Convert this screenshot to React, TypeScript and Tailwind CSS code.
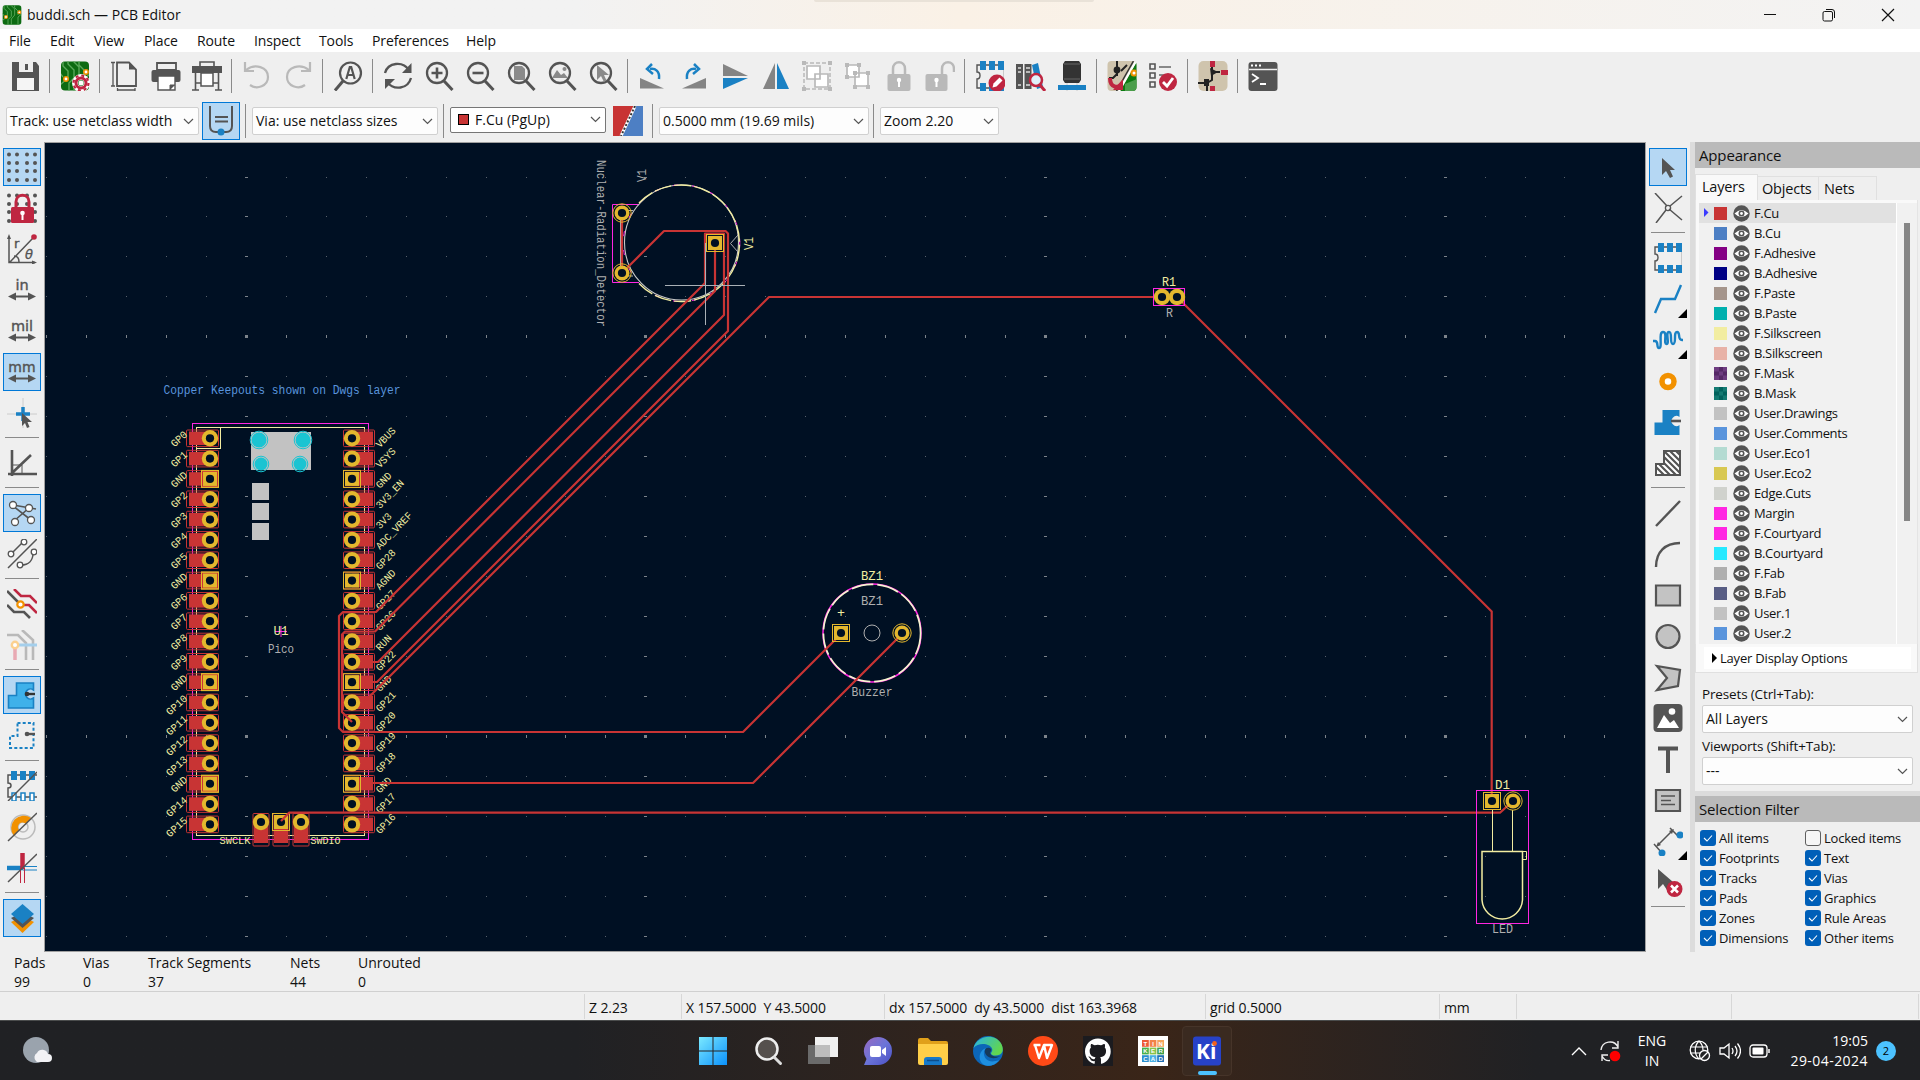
import React from 'react';
import type { ReactNode } from 'react';

const D = '#545454';
const B = '#1a81c4';
const R = '#bf2641';
const G = '#b9b9b9';
const CU = '#c83434';
const GOLD = '#e3b72e';
const BG = '#001023';
const SILK = '#f2eda1';
const FAB = '#afafaf';

function Ic({ children, s = 30 }: { children: ReactNode; s?: number }) {
  return (
    <svg width={s} height={s} viewBox="0 0 30 30" fill="none" className="block shrink-0">
      {children}
    </svg>
  );
}

function BoardBg({ id }: { id: string }) {
  return (
    <g>
      <clipPath id={id}><rect x="1" y="0.5" width="28" height="29" rx="4" /></clipPath>
      <g clipPath={`url(#${id})`}>
        <rect width="30" height="30" fill="#0d6b12" />
        <path d="M3 0v5l5 5v7l-8 7M8 0v3l6 6v8l-5 5v8M13 0l6 6v9l-5 6v9M19 0v4l5 5v6M30 13l-6 5v12M0 12l3 4" stroke="#5aa85a" strokeWidth="1.4" />
        <circle cx="6" cy="18" r="2.2" fill="#fff" stroke="#f29100" strokeWidth="1.6" />
        <circle cx="26" cy="11" r="2.2" fill="#fff" stroke="#f29100" strokeWidth="1.6" />
      </g>
    </g>
  );
}

const Lens = ({ children }: { children?: ReactNode }) => (
  <Ic>
    <circle cx="13" cy="12" r="10" stroke={D} strokeWidth="2.3" />
    <path d="M20 20l8.500 9" stroke={D} strokeWidth="3" />
    {children}
  </Ic>
);

const Chip = ({ edit }: { edit?: boolean }) => (
  <Ic>
    <path d="M29 4H2v7c4 0 4 7 0 7v9h27" stroke={D} strokeWidth="1.400" />
    <path d="M28.500 4v23" stroke="#c9c9c9" />
    <path d="M5 0h6v9H5zM14 0h6v9h-6zM23 0h6v9h-6z" fill={B} />
    <path d="M5 22h6v8H5zM14 22h6v8h-6zM23 22h6v8h-6z" fill={B} />
    {edit && (
      <g>
        <circle cx="22" cy="22" r="8.500" fill={R} />
        <path d="M17.500 26.500l1-4 6-6 3 3-6 6z" fill="#fff" />
      </g>
    )}
  </Ic>
);

const topIcons: ReactNode[] = [
  <Ic><path d="M2 1h24l3 4v25H2z" fill={D} /><path d="M9 1h14v10H9z" fill="#efefef" /><path d="M15 3h3v6h-3z" fill={D} /><path d="M7 17h17v12H7z" fill="#f5f5f5" /></Ic>,
  '|',
  <Ic><BoardBg id="b1" /><circle cx="21" cy="22" r="6" stroke="#fff" strokeWidth="6" /><circle cx="21" cy="22" r="5" stroke={R} strokeWidth="3" /><circle cx="21" cy="22" r="7.500" stroke={R} strokeWidth="2.200" strokeDasharray="3 2.900" /><circle cx="21" cy="22" r="2.500" fill="#fff" /></Ic>,
  '|',
  <Ic><path d="M7 1.500h12l7 7V25H7z" stroke={D} strokeWidth="1.800" /><path d="M19 1.500v7h7" fill={D} /><path d="M3 1v24M1 1.500h4M1 25h4M7 29h18M7.500 27v4M25 27v4" stroke={D} strokeWidth="1.300" /></Ic>,
  <Ic><path d="M6 2h19v7H6z" stroke={D} strokeWidth="1.800" /><rect x="0.500" y="9" width="29" height="12" rx="2" fill={D} /><path d="M7 15h17v14H7z" fill="#fff" stroke={D} strokeWidth="1.400" /><path d="M19 29v-5h5" fill={D} stroke={D} /></Ic>,
  <Ic><path d="M8 1h14v5H8z" stroke={D} strokeWidth="1.600" /><path d="M0 5h30v7H0z" fill={D} /><path d="M9 12h12v13H9z" fill="#fff" stroke={D} strokeWidth="1.500" /><path d="M3.500 12v17M26.500 12v17M0 29h7M23 29h7M4 22h5M21 22h5" stroke={D} strokeWidth="1.600" /></Ic>,
  '|',
  <Ic><path d="M3 1v9h9M4 9C13 2 26 6 26 16c0 9-11 13-18 8" stroke={G} strokeWidth="2.200" /></Ic>,
  <Ic><path d="M27 1v9h-9M26 9C17 2 4 6 4 16c0 9 11 13 18 8" stroke={G} strokeWidth="2.200" /></Ic>,
  '|',
  <Ic><circle cx="17.500" cy="12" r="10.500" stroke={D} strokeWidth="2.200" /><path d="M10 20l-8 9.500" stroke={D} strokeWidth="3" /><path d="M13.300 18l3.500-12h1.400l3.500 12M14.800 14h5.400" stroke={D} strokeWidth="2.200" /></Ic>,
  '|',
  <Ic><path d="M2 12C5 1 20 0 26 9M28 17c-3 11-17 13-24 4" stroke={D} strokeWidth="2.300" /><path d="M28.500 2v10H19z" fill={D} /><path d="M2 28V18h10z" fill={D} /></Ic>,
  <Lens><path d="M7.500 12h11M13 6.500v11" stroke={D} strokeWidth="2.600" /></Lens>,
  <Lens><path d="M7.500 12h11" stroke={D} strokeWidth="2.600" /></Lens>,
  <Lens><path d="M8 5h8l3 3v11H8z" fill="#8a8a8a" /></Lens>,
  <Lens><path d="M5 17l5-8 4 5 3-2 4 5z" fill="#8a8a8a" /><circle cx="17.500" cy="8" r="2" fill="#8a8a8a" /></Lens>,
  <Lens><path d="M9 4v15l4-4 3 6 2.500-1.500L16 14h5z" fill="#8a8a8a" /></Lens>,
  '|',
  <Ic><path d="M2 17v10.500h24z" fill="#848484" /><path d="M21 18c1-8-4-11-9-10" stroke={B} strokeWidth="2.500" /><path d="M14 3L9 8l6 5" stroke={B} strokeWidth="2.500" /></Ic>,
  <Ic><path d="M27 17v10.500H3z" fill="#848484" /><path d="M8 18c-1-8 4-11 9-10" stroke={B} strokeWidth="2.500" /><path d="M15 3l5 5-6 5" stroke={B} strokeWidth="2.500" /></Ic>,
  <Ic><path d="M3 3v12h25z" fill="#848484" /><path d="M3 28V17h25z" fill={B} /></Ic>,
  <Ic><path d="M14 2v26H2z" fill="#848484" /><path d="M16 2v26h12z" fill={B} /></Ic>,
  <Ic><rect x="2" y="2" width="26" height="26" stroke={G} strokeWidth="1.500" strokeDasharray="4 2" /><path d="M0 0h4v4H0zM26 0h4v4h-4zM0 26h4v4H0zM26 26h4v4h-4z" fill={G} /><path d="M5 5h13v13H5zM13 13h13v13H13z" fill="#fff" stroke={G} strokeWidth="1.700" /></Ic>,
  <Ic><path d="M4 4h12v12H4zM12 12h13v13H12z" fill="#fff" stroke={G} strokeWidth="1.700" /><path d="M2 2h4v4H2zM14 2h4v4h-4zM2 14h4v4H2zM10 10h4v4h-4zM23 10h4v4h-4zM10 24h4v4h-4zM23 24h4v4h-4z" fill={G} /></Ic>,
  <Ic><rect x="3.500" y="13" width="23" height="17" rx="2" fill={G} /><path d="M9 14V8c0-9 12-9 12 0v6" stroke={G} strokeWidth="2.500" /><circle cx="15" cy="19" r="2.200" fill="#fff" /><path d="M14 19h2v7h-2z" fill="#fff" /></Ic>,
  <Ic><rect x="0.500" y="13" width="22" height="17" rx="2" fill={G} /><path d="M17 14V8c0-9 12-9 12 0v3" stroke={G} strokeWidth="2.500" /><circle cx="11.500" cy="19" r="2.200" fill="#fff" /><path d="M10.500 19h2v7h-2z" fill="#fff" /></Ic>,
  '|',
  <Chip edit />,
  <Ic><path d="M0 3h7v25H0zM8.500 3h7v25h-7z" fill={D} /><path d="M2 7h3M2 11h3M10 7h4M10 11h4M2 24h3M10 24h4" stroke="#ddd" strokeWidth="1.300" /><path d="M16 4l6-2 5 24-6 2z" fill={B} /><circle cx="20" cy="19" r="6" fill="#dff0fa" stroke={R} strokeWidth="2.500" /><path d="M24 24l5 6" stroke={R} strokeWidth="3" /></Ic>,
  <Ic><path d="M8 0h14l2 3v16l-2 3H8l-2-3V3z" fill="#333" /><path d="M7 3h16M7 18h16" stroke="#666" /><path d="M10 22v8M20 22v8" stroke="#ccc" /><path d="M1 24h28v5H1z" fill={B} /></Ic>,
  '|',
  <Ic><clipPath id="u1"><rect x="0.500" y="0" width="29" height="30" rx="4" /></clipPath><g clipPath="url(#u1)"><rect width="30" height="30" fill="#cfc4ad" /><path d="M30 0v30H13z" fill="#0d7a12" /><path d="M30 18l-12 5v8h12z" fill="#4b9e4b" /><path d="M10 0v15M2 17h4l4-4" stroke="#222" strokeWidth="2" /><path d="M14 10l6-6" stroke="#222" strokeWidth="2" /><circle cx="10" cy="9" r="3.400" fill="#222" /><path d="M29 0L12 30" stroke="#fff" strokeWidth="2.200" /><path d="M26.500 0L9.500 30" stroke="#333" strokeWidth="1.500" /><circle cx="27" cy="12" r="2.500" fill="#fff" stroke="#f29100" strokeWidth="2" /><path d="M3 17c0 10 8 10 11 7" stroke={R} strokeWidth="4" /><path d="M16 18v11H6z" fill={R} /></g></Ic>,
  <Ic><path d="M2 3h5v5H2zM2 12h5v5H2zM2 21h5v5H2z" stroke={D} strokeWidth="1.600" /><path d="M11 6h12M11 14h6" stroke="#888" strokeWidth="2" /><circle cx="20" cy="21" r="9" fill={R} /><path d="M15 21l4 4 6-8" stroke="#fff" strokeWidth="2.800" /></Ic>,
  '|',
  <Ic><rect x="0.500" width="29" height="30" rx="5" fill="#cfc4ad" /><path d="M14 6v13l-5 3v8M0 22h9M14 11h8" stroke="#222" strokeWidth="2" /><path d="M12 0h5v6h-5zM23 9h7v5h-7zM12 25h5v5h-5z" fill={R} /><path d="M12 7l8 4-7 4M6 18h5v7H6z" fill="#222" /></Ic>,
  '|',
  <Ic><rect x="0.500" y="1" width="29" height="29" rx="3" fill={D} /><path d="M1 8.500h28" stroke="#eee" strokeWidth="1.500" /><path d="M3 4.500h2M7 4.500h2M11 4.500h2" stroke="#fff" strokeWidth="2" /><path d="M4 13l6 4-6 4M12 23h6" stroke="#fff" strokeWidth="1.800" /></Ic>,
];

const Arrows = ({ t, fs }: { t: string; fs: number }) => (
  <Ic>
    <text x="15" y="14.500" textAnchor="middle" fontSize={fs} fill={D} stroke={D} strokeWidth="0.400" fontFamily="DejaVu Sans">{t}</text>
    <path d="M4 21.500h22" stroke={D} strokeWidth="2" /><path d="M1 21.500l8-4v8zM29 21.500l-8-4v8z" fill={D} />
  </Ic>
);

const ZONE = 'M9.500 3h17v7a5 5 0 100 8v10h-25V15.500h8z';
const dots = [2, 10, 20, 28];
const leftIcons: { on?: boolean; i: ReactNode }[] = [
  { on: true, i: <Ic>{dots.flatMap((x) => [2.500, 11, 19, 28].map((y) => <circle key={`${x}-${y}`} cx={x} cy={y} r="2" fill={D} />))}</Ic> },
  { i: <Ic>{dots.flatMap((x) => [2.500, 11, 19, 28].map((y) => <circle key={`${x}-${y}`} cx={x} cy={y} r="2" fill={D} />))}<rect x="4" y="14" width="23" height="16" rx="1.500" fill={R} /><path d="M9 14V9c0-9 13-9 13 0v5" stroke={R} strokeWidth="3" /><circle cx="15.500" cy="20" r="2.300" fill="#fff" /><path d="M14.500 20h2v7h-2z" fill="#fff" /></Ic> },
  { i: <Ic><path d="M2 3v25.500h26M3 28L26 4M7 22c3 0 5 2 5 6" stroke={D} strokeWidth="1.500" /><path d="M0 5l2-5 2 5zM25 26.500l5 2-5 2z" fill={D} /><circle cx="27" cy="3" r="2.800" fill={R} /><text x="7" y="14" fontSize="13" fill={D} stroke={D} strokeWidth="0.400" fontFamily="DejaVu Sans">r</text><text x="18" y="25" fontSize="13" fontStyle="italic" fill={D} stroke={D} strokeWidth="0.300" fontFamily="DejaVu Sans">θ</text></Ic> },
  { i: <Arrows t="in" fs={14.500} /> },
  { i: <Arrows t="mil" fs={14.500} /> },
  { on: true, i: <Arrows t="mm" fs={14} /> },
  { i: <Ic><path d="M0 16h30M16 0v30" stroke="#ccc" /><path d="M9 16h14M16 9v14" stroke={B} strokeWidth="3.500" /><path d="M15 15v13l3-3 2 5 2.500-1-2-5h4.500z" fill={D} /></Ic> },
  { i: <hr /> },
  { i: <Ic><path d="M5 2v26M1 26h29M5 25L24 7" stroke={D} strokeWidth="2.600" /><path d="M5 17h10v9" stroke={D} /></Ic> },
  { i: <hr /> },
  { on: true, i: <Ic><path d="M6 7l23 4M6 8l18 14M22 10L7 23" stroke={D} strokeWidth="1.600" /><circle cx="6" cy="7" r="3.500" fill="#fff" stroke={D} strokeWidth="1.300" /><circle cx="22" cy="10" r="3.500" fill="#fff" stroke={D} strokeWidth="1.300" /><circle cx="8" cy="24" r="3.500" fill="#fff" stroke={D} strokeWidth="1.300" /><circle cx="24" cy="22" r="3.500" fill="#fff" stroke={D} strokeWidth="1.300" /></Ic> },
  { i: <Ic><path d="M1 29L30 0M5 14L17 2M14 26c8 0 12-5 12-12" stroke={D} strokeWidth="1.500" /><circle cx="4" cy="15" r="2.800" fill="#fff" stroke={D} strokeWidth="1.300" /><circle cx="17" cy="3" r="2.800" fill="#fff" stroke={D} strokeWidth="1.300" /><circle cx="13" cy="26" r="2.800" fill="#fff" stroke={D} strokeWidth="1.300" /><circle cx="27" cy="13" r="2.800" fill="#fff" stroke={D} strokeWidth="1.300" /></Ic> },
  { i: <hr /> },
  { i: <Ic><path d="M0 2l12 12M0 16l7 7h10l6 6" stroke={D} strokeWidth="2.600" /><path d="M7 0l7 7h9l7 7M16 16h6l8 8" stroke={R} strokeWidth="2.600" /><circle cx="13.500" cy="15.500" r="3.200" fill="#fff" stroke="#f29100" strokeWidth="2.200" /></Ic> },
  { i: <Ic><path d="M0 5h11l8 8v17M15 0l11 10v20" stroke={G} strokeWidth="2.600" /><path d="M8 15h22" stroke="#a4cfec" strokeWidth="3" /><path d="M8 15v15" stroke="#e8a9b3" strokeWidth="3.500" /><circle cx="8" cy="15" r="3.200" fill="#fff" stroke="#fbd08f" strokeWidth="2.400" /></Ic> },
  { i: <hr /> },
  { on: true, i: <Ic><path d={ZONE} fill="#3fb1ea" stroke={B} strokeWidth="1.600" /><path d="M18 14h10" stroke="#333" strokeWidth="2.400" /><circle cx="20" cy="14" r="2.300" fill="#333" /></Ic> },
  { i: <Ic><path d="M10.500 2h16v25H3V15h7.500z" stroke={B} strokeWidth="2" strokeDasharray="3 2.200" /><path d="M20 13h8" stroke={D} strokeWidth="2.400" /><circle cx="20" cy="13" r="2.300" fill={D} /></Ic> },
  { i: <hr /> },
  { i: <Ic><path d="M30 4H1v8c4 0 4 5 0 5v9h29" stroke={D} strokeWidth="1.500" /><path d="M4 0h6v9H4zM13 0h6v9h-6zM22 0h6v9h-6z" fill={B} /><path d="M5 22h4v8H5zM14 22h4v8h-4zM23 22h4v8h-4z" fill="#fff" stroke={B} strokeWidth="1.500" /><path d="M1 30L30 1" stroke={D} strokeWidth="1.500" /></Ic> },
  { i: <Ic><circle cx="16" cy="15" r="12" stroke="#bbb" strokeWidth="1.500" /><circle cx="16" cy="15" r="5" stroke="#bbb" strokeWidth="1.500" /><path d="M7 24A12.500 12.500 0 0124 6l-5 6a4.500 4.500 0 00-7 6z" fill="#f29100" /><path d="M1 29L30 1" stroke={D} strokeWidth="1.500" /></Ic> },
  { i: <Ic><path d="M0 15h16" stroke={B} strokeWidth="4.500" /><path d="M16 13.500h14M16 17h14" stroke={B} /><path d="M15.500 0v16" stroke={R} strokeWidth="4.500" /><path d="M13.500 15v15M17.500 15v15" stroke={R} /><path d="M1 29L30 1" stroke={D} strokeWidth="1.500" /></Ic> },
  { i: <hr /> },
  { on: true, i: <Ic><path d="M4 19l11.500 11L27 19l-4-2H8z" fill="#f29100" /><path d="M4 15l11.500 10L27 15l-4-2H8z" fill={D} /><path d="M15.500 1L27 11 15.500 21 4 11z" fill={B} /></Ic> },
];

const rightIcons: { on?: boolean; more?: boolean; i: ReactNode }[] = [
  { on: true, i: <Ic><path d="M9 6v17l4-4 4 7 3-1.500-3-6.500h5z" fill={D} /></Ic> },
  { i: <Ic><path d="M2 0l12 13M29 3L17 13M3 30l10-13M29 27L16 16" stroke={D} strokeWidth="1.500" /><circle cx="15" cy="15" r="2.600" stroke={D} strokeWidth="1.300" /></Ic> },
  { i: <hr /> },
  { i: <Chip /> },
  { more: true, i: <Ic><path d="M2 29l6-14h14l6-14" stroke={B} strokeWidth="2.400" /></Ic> },
  { more: true, i: <Ic><path d="M0 16h2c4 0 1 7 4 7 4 0-1-16 4-16s0 12 3.500 12S12 7 16 7s0 12 4 12 0-12 4-12 0 8 5 8h1" stroke={B} strokeWidth="2.400" /></Ic> },
  { i: <Ic><circle cx="15" cy="15.500" r="6" stroke="#f29100" strokeWidth="5.500" fill="#fff" /></Ic> },
  { i: <Ic><path d={ZONE} fill={B} /><path d="M18 14h10" stroke={D} strokeWidth="2.600" /></Ic> },
  { i: <Ic><clipPath id="kz"><path d="M11 3h16v24H3V16h8z" /></clipPath><path d="M11 3h16v24H3V16h8z" fill="#fff" stroke={D} strokeWidth="2" /><path clipPath="url(#kz)" d="M10 2l20 20M3 1l26 26M17 3l14 14M2 6l24 24M0 10l20 20M-2 14l17 17M23 3l8 8" stroke={D} strokeWidth="2.200" /></Ic> },
  { i: <hr /> },
  { i: <Ic><path d="M3 28L27 3" stroke={D} strokeWidth="2.400" /></Ic> },
  { i: <Ic><path d="M3 28C3 13 12 4 27 4" stroke={D} strokeWidth="2.400" /></Ic> },
  { i: <Ic><path d="M3 5.500h24v20H3z" fill="#c3c3c3" stroke={D} strokeWidth="2.200" /></Ic> },
  { i: <Ic><circle cx="15" cy="15.500" r="11.500" fill="#c3c3c3" stroke={D} strokeWidth="2.200" /></Ic> },
  { i: <Ic><path d="M4 4l23 4-2 16-21 4 10-12z" fill="#c3c3c3" stroke={D} strokeWidth="2.200" /></Ic> },
  { i: <Ic><rect x="0.500" y="1" width="29" height="28" rx="4" fill={D} /><circle cx="19" cy="8.500" r="3.300" fill="#fff" /><path d="M4 25l7-13 6 8 4-3 5 8z" fill="#fff" /></Ic> },
  { i: <Ic><path d="M5 4.500h20M15 4.500V29" stroke={D} strokeWidth="4" /></Ic> },
  { i: <Ic><path d="M3 5h24v21H3z" fill="#c3c3c3" stroke={D} strokeWidth="2.200" /><path d="M8 11h14M8 15.500h10M8 19.500h14" stroke={D} strokeWidth="1.700" /></Ic> },
  { more: true, i: <Ic><path d="M1 18l8 9M17 2l9 9M5 19L19 5" stroke={D} strokeWidth="1.500" /><path d="M3 21l2-5 3 3zM21 3l-2 5-3-3z" fill={D} /><circle cx="9" cy="27" r="3.500" fill={B} /><circle cx="27" cy="9" r="3.500" fill={B} /></Ic> },
  { i: <Ic><path d="M5 2v20l5-5 4 6 4-7 2-1z" fill={D} /><circle cx="21.500" cy="22" r="8" fill={R} /><path d="M18 18.500l7 7M25 18.500l-7 7" stroke="#fff" strokeWidth="2.500" /></Ic> },
  { i: <hr /> },
];

function VBar({ items }: { items: { on?: boolean; more?: boolean; i: ReactNode }[] }) {
  return (
    <div className="flex w-[44px] flex-col items-center pt-[4px]">
      {items.map((it, k) =>
        (it.i as any).type === 'hr' ? (
          <div key={k} className="flex h-[9px] w-full shrink-0 items-center justify-center">
            <div className="h-px w-[34px] bg-[#8a8a8a]" />
          </div>
        ) : (
          <div key={k} className="flex h-[41px] w-full shrink-0 items-center justify-center">
            <div className={it.on ? 'flex size-[38px] items-center justify-center border border-[#0078d7] bg-[#b5d7f3]' : 'relative flex size-[38px] items-center justify-center'}>
              {it.i}
              {it.more && <svg className="absolute right-0 bottom-0" width="9" height="9"><path d="M9 0v9H0z" fill="#000" /></svg>}
            </div>
          </div>
        ),
      )}
    </div>
  );
}

const Chev = () => (
  <svg width="11" height="7" viewBox="0 0 11 7" fill="none" className="shrink-0"><path d="M1 1l4.500 4.500L10 1" stroke="#555" strokeWidth="1.200" /></svg>
);

function Combo({ w, children, cls = '' }: { w: string; children: ReactNode; cls?: string }) {
  return (
    <div className={`flex h-[28px] shrink-0 items-center justify-between rounded-[2px] border border-[#d0d0d0] bg-[#fdfdfd] pr-[4px] pl-[3px] ${w} ${cls}`}>
      <span className="flex items-center whitespace-nowrap">{children}</span>
      <Chev />
    </div>
  );
}

const VSep = ({ cls }: { cls: string }) => <div className={`h-[34px] w-px shrink-0 bg-[#8a8a8a] ${cls}`} />;

const layers: [string, string, string?][] = [
  ['F.Cu', '#c83434'], ['B.Cu', '#4d7fc4'], ['F.Adhesive', '#840084'], ['B.Adhesive', '#000084'],
  ['F.Paste', '#a5958c'], ['B.Paste', '#00b0ae'], ['F.Silkscreen', '#f2eda1'], ['B.Silkscreen', '#e8b2a7'],
  ['F.Mask', '#6d3c80', '#552866'], ['B.Mask', '#147a72', '#02625c'], ['User.Drawings', '#c2c2c2'], ['User.Comments', '#5994dc'],
  ['User.Eco1', '#b4dbd2'], ['User.Eco2', '#d8c852'], ['Edge.Cuts', '#d0d2cd'], ['Margin', '#ff26e2'],
  ['F.Courtyard', '#ff26e2'], ['B.Courtyard', '#26e9ff'], ['F.Fab', '#afafaf'], ['B.Fab', '#585d84'],
  ['User.1', '#c2c2c2'], ['User.2', '#5994dc'],
];

const Eye = () => (
  <svg width="17" height="17" viewBox="0 0 17 17" className="mr-[4px] shrink-0">
    <circle cx="8.500" cy="8.500" r="8.200" fill={D} />
    <path d="M1.500 8.500q7-7 14 0q-7 7-14 0z" fill="#fff" />
    <circle cx="8.500" cy="8.500" r="3" fill={D} /><circle cx="8.500" cy="8.500" r="1.400" fill="#fff" />
  </svg>
);

function Check({ label, off }: { label: string; off?: boolean }) {
  return (
    <div className="flex h-[20px] items-center text-[13px] tracking-[-0.22px] whitespace-nowrap">
      <div className={off ? 'mr-[3px] size-[16px] rounded-[3px] border border-[#5f5f5f] bg-[#f6f6f6]' : 'mr-[3px] size-[16px] rounded-[3px] bg-[#005fb8]'}>
        {!off && <svg width="16" height="16" fill="none"><path d="M4 8l3 3 5-5.500" stroke="#fff" strokeWidth="1.100" /></svg>}
      </div>
      {label}
    </div>
  );
}

const leftPins = ['GP0', 'GP1', 'GND', 'GP2', 'GP3', 'GP4', 'GP5', 'GND', 'GP6', 'GP7', 'GP8', 'GP9', 'GND', 'GP10', 'GP11', 'GP12', 'GP13', 'GND', 'GP14', 'GP15'];
const rightPins = ['VBUS', 'VSYS', 'GND', '3V3_EN', '3V3', 'ADC_VREF', 'GP28', 'AGND', 'GP27', 'GP26', 'RUN', 'GP22', 'GND', 'GP21', 'GP20', 'GP19', 'GP18', 'GND', 'GP17', 'GP16'];

function Pad({ x, y, sq, ring }: { x: number; y: number; sq?: boolean; ring?: boolean }) {
  return (
    <g>
      {sq ? <rect x={x - 7} y={y - 7} width="14" height="14" fill={GOLD} /> : <circle cx={x} cy={y} r={ring ? 7.500 : 8.200} fill={GOLD} />}
      {sq && <rect x={x - 8.500} y={y - 8.500} width="17" height="17" fill="none" stroke={GOLD} />}
      {ring && !sq && <circle cx={x} cy={y} r="9.200" fill="none" stroke={GOLD} />}
      <circle cx={x} cy={y} r="4.100" fill={BG} />
    </g>
  );
}

function Label({ x, y, w, fs, fill, rot = 0, anchor = 'middle', children }: { x: number; y: number; w: number; fs: number; fill: string; rot?: number; anchor?: 'start' | 'middle' | 'end'; children: string }) {
  return (
    <text transform={`translate(${x} ${y}) rotate(${rot})`} textAnchor={anchor} fontSize={fs} fill={fill} textLength={w} lengthAdjust="spacingAndGlyphs" fontFamily='"Liberation Mono", monospace'>
      {children}
    </text>
  );
}

const traces = [
  'M622 273L664 231H725.500L728 233.500V331L377 682H366',
  'M622 213V273',
  'M715 243V291L375 631.500H345L342 634.500V712L352 722',
  'M705 283V233.500H724V315L378 662H366',
  'M705 283L376 612H343L339 616V728L343 732H743L841 634',
  'M1162 297H769L371 695L364 702',
  'M366 783H753L902 634',
  'M281 821L289 812.700H1500L1513 801',
  'M1177 297L1491.700 611.500V801',
];

function Board() {
  const xs = Array.from({ length: 40 }, (_, i) => Math.floor(46.500 + i * 39.960));
  const ys = Array.from({ length: 20 }, (_, i) => Math.floor(177 + i * 39.960));
  return (
    <svg width="1600" height="808" viewBox="45 143 1600 808" className="block" style={{ background: BG }}>
      <g fill="#7d848b" shapeRendering="crispEdges">
        {xs.flatMap((x, i) =>
          ys.map((y, j) => {
            const mx = i % 10 === 5;
            const my = j % 10 === 4;
            const w = mx ? 3 : 1;
            const h = my ? 3 : 1;
            return <rect key={`${i}-${j}`} x={x - (w - 1) / 2} y={y - (h - 1) / 2} width={w} height={h} opacity={mx || my ? 1 : 0.700} />;
          }),
        )}
      </g>
      <g fill="none" shapeRendering="crispEdges">
        <rect x="192.500" y="423.500" width="176" height="416" stroke="#ff26e2" />
        <rect x="196.500" y="427.500" width="168" height="408" stroke={SILK} />
        <path d="M220.500 427.500V448.500H196.500" stroke={SILK} />
      </g>
      <rect x="251" y="432" width="60" height="38" fill="#c2c2c2" />
      {[483, 503, 523].map((y) => <rect key={y} x="252" y={y} width="17" height="17" fill="#c2c2c2" />)}
      {[[259, 440, 7.500], [303, 440, 7.500], [261, 464, 6.500], [300, 464, 6.500]].map(([x, y, r]) => (
        <g key={`${x}${y}`}><circle cx={x} cy={y} r={r} fill="#1ac4d2" /><circle cx={x} cy={y} r={r + 1.300} fill="none" stroke="#1ac4d2" /></g>
      ))}
      {leftPins.map((t, i) => {
        const y = 438.300 + i * 20.320;
        const gnd = t === 'GND';
        return (
          <g key={i}>
            <rect x="186.500" y={y - 8.300} width="32" height="16.600" rx="1" fill="none" stroke={CU} />
            <rect x="189" y={y - 6.800} width="21" height="13.600" fill={CU} />
            {gnd && <rect x="201.500" y={y - 8.300} width="17" height="16.600" fill={CU} stroke={GOLD} />}
            <Pad x={210} y={y} sq={gnd} />
            <Label x={188} y={y - 3} w={t.length * 6.100} fs={10.500} fill={SILK} rot={-42} anchor="end">{t}</Label>
          </g>
        );
      })}
      {rightPins.map((t, i) => {
        const y = 438.300 + i * 20.320;
        const gnd = i % 5 === 2;
        return (
          <g key={i}>
            <rect x="343.500" y={y - 8.300} width="31" height="16.600" rx="1" fill="none" stroke={CU} />
            <rect x="352" y={y - 6.800} width="21" height="13.600" fill={CU} />
            <Pad x={352} y={y} sq={gnd} />
            <Label x={380} y={y + 10} w={t.length * 5.900} fs={10.500} fill={SILK} rot={-46} anchor="start">{t}</Label>
          </g>
        );
      })}
      {[261, 281, 301].map((x, i) => (
        <g key={x}>
          <rect x={x - 8} y="813.500" width="16" height="32.500" rx="1" fill="none" stroke={CU} />
          <rect x={x - 7} y="822" width="14" height="21" fill={CU} />
          <Pad x={x} y={822} sq={i === 1} />
        </g>
      ))}
      <Label x={235} y={844} w={31} fs={10} fill={SILK}>SWCLK</Label>
      <Label x={325.500} y={844} w={30} fs={10} fill={SILK}>SWDIO</Label>
      <Label x={282} y={394} w={237} fs={12.500} fill="#5994dc">Copper Keepouts shown on Dwgs layer</Label>
      <path d="M275 631.500H287M281 626V637" stroke="#ff26e2" />
      <Label x={281} y={635} w={15} fs={13} fill={SILK}>U1</Label>
      <Label x={281} y={653} w={26} fs={13} fill={FAB}>Pico</Label>

      <g fill="none">
        <path d="M639 204.500H612.500V282.500H639" stroke="#ff26e2" />
        <ellipse cx="681.500" cy="242.500" rx="57" ry="57.500" stroke="#c9c9c9" strokeWidth="1.100" />
        <circle cx="681.500" cy="243.200" r="58.300" stroke="#ff26e2" strokeDasharray="5 14" />
        <path d="M639 203A58.300 58.300 0 11639 283.500" stroke={SILK} strokeWidth="1.400" strokeDasharray="17 3" />
        <path d="M622 210.500H633M622 276H633M620.500 215V271M738 235L730.500 243.500L738 252" stroke={FAB} />
        <circle cx="872" cy="633" r="49" stroke="#ff26e2" strokeWidth="1.500" />
        <circle cx="872" cy="633" r="48.600" stroke="#f7f4d0" strokeWidth="1.700" strokeDasharray="22 4" />
        <circle cx="872" cy="633" r="8" stroke={FAB} />
      </g>
      <Label x={597} y={160} w={167} fs={13} fill={FAB} rot={90} anchor="start">Nuclear-Radiation_Detector</Label>
      <Label x={646} y={182} w={13} fs={13} fill={FAB} rot={-90} anchor="start">V1</Label>
      <g fill="none" stroke={CU} strokeWidth="2.200" strokeLinejoin="round">
        {traces.map((d) => <path key={d} d={d} />)}
      </g>
      <Pad x={622} y={213} ring />
      <Pad x={622} y={273} ring />
      <Pad x={715} y={243} sq />
      <Label x={753} y={250} w={13} fs={13} fill={SILK} rot={-90} anchor="start">V1</Label>
      <path d="M665 285.500H745M705.500 243V325" stroke="#a9b0b6" />

      <rect x="1153.500" y="288.500" width="31" height="17" fill="none" stroke="#ff26e2" />
      <Pad x={1162} y={297} />
      <Pad x={1177} y={297} />
      <Label x={1169} y={286} w={14} fs={12.500} fill={SILK}>R1</Label>
      <Label x={1169.500} y={316.500} w={7} fs={12.500} fill={FAB}>R</Label>

      <Pad x={841} y={633} sq />
      <Pad x={902} y={633} ring />
      <Label x={872} y={580} w={22} fs={12.500} fill={SILK}>BZ1</Label>
      <Label x={872} y={605} w={22} fs={12.500} fill={FAB}>BZ1</Label>
      <Label x={841} y={617} w={8} fs={13} fill={SILK}>+</Label>
      <Label x={872} y={696} w={41} fs={12.500} fill={FAB}>Buzzer</Label>

      <g fill="none">
        <rect x="1476.500" y="790.500" width="52" height="133" stroke="#ff26e2" />
        <path d="M1492.500 810V851M1512.500 810V851M1522.500 851.500H1526.500V859.500H1523" stroke={SILK} />
        <path d="M1482 851.500H1522.500V900A20.300 20.300 0 011482 900Z" stroke={SILK} strokeWidth="1.500" />
      </g>
      <Pad x={1492} y={801} sq />
      <Pad x={1513} y={801} ring />
      <Label x={1502.500} y={789} w={15} fs={12.500} fill={SILK}>D1</Label>
      <Label x={1502.500} y={933} w={21} fs={12.500} fill={FAB}>LED</Label>
    </svg>
  );
}

const stats: [string, string, string][] = [
  ['Pads', '99', 'w-[69px]'], ['Vias', '0', 'w-[65px]'], ['Track Segments', '37', 'w-[142px]'], ['Nets', '44', 'w-[68px]'], ['Unrouted', '0', 'w-[90px]'],
];

const status: [string, string][] = [
  ['', 'w-[585px]'], ['Z 2.23', 'w-[97px]'], ['X 157.5000  Y 43.5000', 'w-[203px]'], ['dx 157.5000  dy 43.5000  dist 163.3968', 'w-[321px]'],
  ['grid 0.5000', 'w-[234px]'], ['mm', 'w-[77px]'], ['', 'w-[215px]'], ['', 'w-[187px]'],
];

const tink = ['#ee5a36', '#f2824a', '#f5a45b', '#49b04d', '#8bc34a', '#3f9f4c', '#2a8fd0', '#4ab0e4', '#1f6fb5'];
const taskIcons: ReactNode[] = [
  <Ic><defs><linearGradient id="win" x1="0" y1="0" x2="1" y2="1"><stop offset="0" stopColor="#7be9ff" /><stop offset="1" stopColor="#0b91fb" /></linearGradient></defs><path d="M1 1h13.500v13.500H1zM15.500 1H29v13.500H15.500zM1 15.500h13.500V29H1zM15.500 15.500H29V29H15.500z" fill="url(#win)" /></Ic>,
  <Ic><circle cx="14" cy="13" r="10.500" stroke="#eee" strokeWidth="2.500" fill="#55504d" /><path d="M21.500 21.500l6 6" stroke="#ddd" strokeWidth="3" strokeLinecap="round" /></Ic>,
  <Ic><path d="M0 9h22v19H0z" fill="#6a6a6a" /><path d="M7 1h23v20H7z" fill="#f0f0f0" /><path d="M7 9h15v12H7z" fill="#bdbdbd" /></Ic>,
  <Ic><defs><linearGradient id="ch" x1="0" y1="0" x2="1" y2="1"><stop offset="0" stopColor="#9a6ac0" /><stop offset="0.500" stopColor="#6b74d8" /><stop offset="1" stopColor="#4a4fc4" /></linearGradient></defs><path d="M15 1a14 14 0 110 28H1l2.500-6A14 14 0 0115 1z" fill="url(#ch)" /><rect x="7" y="10" width="11" height="11" rx="2" fill="#fff" /><path d="M19 14l4-3v9l-4-3z" fill="#fff" /></Ic>,
  <Ic><path d="M0 4q0-2 2-2h8l3 3h15q2 0 2 2v20H0z" fill="#e0a01a" /><path d="M0 8h30v19q0 2-2 2H2q-2 0-2-2z" fill="#ffcf48" /><path d="M6 29v-5q0-3 3-3h12q3 0 3 3v5z" fill="#1679c9" /><path d="M9 24.500h12" stroke="#0c4e8c" strokeWidth="1.500" /></Ic>,
  <Ic><defs><linearGradient id="e1" x1="0" y1="0" x2="1" y2="0.500"><stop offset="0" stopColor="#27b3e8" /><stop offset="1" stopColor="#62d64d" /></linearGradient></defs><circle cx="15" cy="15" r="15" fill="#0c66b8" /><path d="M0.500 12C3 2 15-2 23 2.500c7 4 9 13 4 16-4 2-9 1-9-1 0-1 2-2 1-5C17 7 5 6 0.500 12z" fill="url(#e1)" /><path d="M11 15c-1 8 5 13 15 9 -3 5-9 6.500-13 5.500C4 27 5 15 13 12z" fill="#1e8fe0" /><path d="M12 14c-1 5 4 9 11 8l5-2c-8 2-13-2-10-5 2-3-5-5-6-1z" fill="#163a5c" /></Ic>,
  <Ic><circle cx="15" cy="15" r="15" fill="#ff4a17" /><path d="M5.500 9h7M7 9l4 13 5-13 3 13 5-13h-8M11 22h1" stroke="#fff" strokeWidth="2.400" strokeLinejoin="round" /></Ic>,
  <Ic><path d="M0 0h30v30H0z" fill="#1b1b1f" /><path transform="translate(2 2) scale(1.080)" fill="#fff" d="M12 .5C5.400.5 0 5.900 0 12.500c0 5.300 3.400 9.800 8.200 11.400.6.100.8-.3.800-.6v-2c-3.300.7-4-1.600-4-1.600-.6-1.400-1.400-1.800-1.400-1.800-1-.7.100-.7.100-.7 1.200.1 1.800 1.200 1.800 1.200 1.100 1.800 2.800 1.300 3.500 1 .1-.8.400-1.300.8-1.600-2.700-.3-5.500-1.300-5.500-5.900 0-1.300.5-2.400 1.200-3.200-.1-.3-.5-1.500.1-3.200 0 0 1-.3 3.300 1.200a11.500 11.500 0 016 0c2.300-1.500 3.300-1.200 3.300-1.200.7 1.700.2 2.900.1 3.200.8.800 1.200 1.900 1.200 3.200 0 4.600-2.800 5.600-5.500 5.900.4.400.8 1.100.8 2.200v3.300c0 .3.200.7.800.6 4.800-1.600 8.200-6.100 8.200-11.400C24 5.900 18.600.5 12 .5z" /></Ic>,
  <Ic><path d="M0 0h30v30H0z" fill="#fff" />{'TINKERCAD'.split('').map((c, i) => <g key={i}><rect x={4 + (i % 3) * 7.600} y={4 + Math.floor(i / 3) * 7.600} width="6.800" height="6.800" fill={tink[i]} /><text x={7.400 + (i % 3) * 7.600} y={9.500 + Math.floor(i / 3) * 7.600} textAnchor="middle" fontSize="6" fontWeight="700" fill="#fff" fontFamily="Liberation Sans">{c}</text></g>)}</Ic>,
  <Ic><rect x="1" y="0.500" width="28" height="29" rx="3" fill="#2742c8" /><text x="4" y="23" fontSize="21" fontWeight="700" fill="#fff" fontFamily="Open Sans">Ki</text><circle cx="22.500" cy="7.500" r="2.400" fill="#f2611c" /></Ic>,
];

export default function App() {
  return (
    <div className="flex h-[1080px] w-[1920px] flex-col overflow-hidden bg-[#efefef] font-['Open_Sans',sans-serif] text-[14px] leading-none text-[#111]">
      <div className="flex h-[29px] shrink-0 items-center bg-linear-to-r from-[#f2f2f2] from-30% via-[#faf1e6] via-50% to-[#f3f3f3] pl-[2px]">
        <svg width="20" height="20" viewBox="0 0 30 30" fill="none"><BoardBg id="b0" /></svg>
        <span className="ml-[5px]">buddi.sch — PCB Editor</span>
        <div className="ml-[633px] h-[2px] w-[280px] self-start rounded-b bg-[#e9e2d8]" />
        <div className="ml-auto flex items-center gap-[45px] pr-[25px] text-black">
          <svg width="14" height="14"><path d="M1 6.500h12" stroke="#111" /></svg>
          <svg width="14" height="14" fill="none"><rect x="1" y="3.500" width="9.500" height="9.500" rx="1.500" stroke="#111" /><path d="M4 1.500h6a2.500 2.500 0 012.500 2.500v6" stroke="#111" /></svg>
          <svg width="14" height="14"><path d="M1 1l12 12M13 1L1 13" stroke="#111" strokeWidth="1.200" /></svg>
        </div>
      </div>
      <div className="flex h-[23px] shrink-0 items-center bg-white pt-[1px] pl-[9px] tracking-[-0.1px]">
        <span className="w-[41px]">File</span><span className="w-[44px]">Edit</span><span className="w-[50px]">View</span>
        <span className="w-[53px]">Place</span><span className="w-[57px]">Route</span><span className="w-[65px]">Inspect</span>
        <span className="w-[53px]">Tools</span><span className="w-[94px]">Preferences</span><span>Help</span>
      </div>
      <div className="flex h-[48px] shrink-0 items-center pl-[4px]">
        {topIcons.map((n, k) =>
          n === '|' ? (
            <div key={k} className="flex w-[9px] shrink-0 justify-center"><VSep cls="" /></div>
          ) : (
            <div key={k} className="flex w-[41px] shrink-0 justify-center">{n}</div>
          ),
        )}
      </div>
      <div className="flex h-[42px] shrink-0 items-center pl-[6px]">
        <Combo w="w-[193px]">Track: use netclass width</Combo>
        <div className="ml-[3px] flex size-[38px] items-center justify-center border border-[#0078d7] bg-[#b5d7f3]">
          <Ic><path d="M4 0v20q0 6 6 6h10q6 0 6-6V0M9 11h13M9 15.500h13" stroke={D} strokeWidth="2" /><circle cx="15" cy="26" r="3.500" fill={B} /></Ic>
        </div>
        <VSep cls="ml-[5px] mr-[6px]" />
        <Combo w="w-[186px]">Via: use netclass sizes</Combo>
        <VSep cls="ml-[5px] mr-[6px]" />
        <Combo w="w-[156px]" cls="!h-[26px] mb-[3px] !border-[#767676] !bg-white">
          <span className="mr-[6px] ml-[4px] size-[11px] border border-black bg-[#c83434]" />F.Cu (PgUp)
        </Combo>
        <svg width="30" height="30" className="ml-[7px]"><path d="M0 0h30v30H0z" fill="#4d7fc4" /><path d="M0 0h22L8 30H0z" fill="#c83434" /><path d="M22 0L8 30" stroke="#fff" strokeWidth="3" /><path d="M22 0L8 30" stroke="#333" strokeWidth="2" strokeDasharray="2 2" /></svg>
        <VSep cls="ml-[9px] mr-[6px]" />
        <Combo w="w-[210px]">0.5000 mm (19.69 mils)</Combo>
        <VSep cls="ml-[4px] mr-[6px]" />
        <Combo w="w-[119px]">Zoom 2.20</Combo>
      </div>
      <div className="flex h-[810px] shrink-0">
        <VBar items={leftIcons} />
        <div className="h-[810px] w-[1602px] shrink-0 border border-[#a0a0a0]"><Board /></div>
        <VBar items={rightIcons} />
        <div className="w-[5px] shrink-0 bg-[#dcdcdc]" />
        <div className="flex w-[225px] flex-col">
          <div className="flex h-[26px] shrink-0 items-center bg-[#bababa] pt-px pl-[4px] text-[15px] tracking-[-0.15px]">Appearance</div>
          <div className="mt-[6px] flex h-[26px] shrink-0 items-end text-[14.500px] tracking-[-0.2px]">
            <div className="flex h-[26px] w-[63px] items-center border border-b-0 border-[#e0e0e0] bg-[#f9f9f9] pl-[6px]">Layers</div>
            <div className="flex h-[24px] w-[61px] items-center border-t border-r border-[#e0e0e0] pt-px pl-[4px]">Objects</div>
            <div className="flex h-[24px] w-[58px] items-center border-t border-r border-[#e0e0e0] pt-px pl-[5px]">Nets</div>
          </div>
          <div className="flex h-[444px] w-[223px] shrink-0 border-x border-[#e4e4e4] bg-[#f9f9f9] pt-[3px] pl-[3px]">
            <div className="w-[197px] bg-[#f1f1f1]">
              {layers.map(([n, c, c2], i) => (
                <div key={n} className={i === 0 ? 'flex h-[20px] items-center bg-[#e1e1e1]' : 'flex h-[20px] items-center'}>
                  <svg width="15" height="13" className="shrink-0">{i === 0 && <path d="M5 1l4.500 4.500L5 10z" fill="#3c3cff" />}</svg>
                  <svg width="13" height="13" className="mr-[6px] shrink-0"><rect width="13" height="13" fill={c} />{c2 && <path d="M5 0h4v4.500h4v4H9v4.500H5v-4.500H0v-4h5zM5 4.500v4h4v-4z" fill={c2} fillRule="evenodd" />}</svg>
                  <Eye />
                  <span className="pt-px text-[13px] tracking-[-0.35px]">{n}</span>
                </div>
              ))}
            </div>
            <div className="flex-1 border-l border-white bg-[#f1f1f1] pt-[20px] pl-[7px]"><div className="h-[298px] w-[6px] bg-[#868686]" /></div>
          </div>
          <div className="flex h-[29px] w-[223px] shrink-0 items-center border border-t-0 border-[#e0e0e0] bg-[#f9f9f9] pl-[8px]">
            <div className="flex h-[22px] w-[207px] items-center bg-white pl-[8px] text-[13px] tracking-[-0.2px]">
              <svg width="5" height="10" className="mr-[3px]"><path d="M0 0l5 5-5 5z" /></svg>Layer Display Options
            </div>
          </div>
          <div className="mt-[15px] flex h-[14px] items-center pl-[7px] text-[13.500px] tracking-[-0.15px]">Presets (Ctrl+Tab):</div>
          <Combo w="w-[211px]" cls="ml-[7px] mt-[3px]">All Layers</Combo>
          <div className="mt-[7px] flex h-[14px] items-center pl-[7px] text-[13.500px] tracking-[-0.15px]">Viewports (Shift+Tab):</div>
          <Combo w="w-[211px]" cls="ml-[7px] mt-[3px]">---</Combo>
          <div className="mt-[6px] h-[5px] shrink-0 bg-[#dcdcdc]" />
          <div className="flex h-[26px] shrink-0 items-center bg-[#bababa] pt-px pl-[4px] text-[15px] tracking-[-0.15px]">Selection Filter</div>
          <div className="mt-[6px] grid grid-cols-[105px_115px] pl-[5px]">
            <Check label="All items" /><Check label="Locked items" off />
            <Check label="Footprints" /><Check label="Text" />
            <Check label="Tracks" /><Check label="Vias" />
            <Check label="Pads" /><Check label="Graphics" />
            <Check label="Zones" /><Check label="Rule Areas" />
            <Check label="Dimensions" /><Check label="Other items" />
          </div>
        </div>
      </div>
      <div className="flex h-[40px] shrink-0 border-b border-[#d0d0d0] pt-px pl-[14px]">
        {stats.map(([a, b, w]) => (
          <div key={a} className={`flex shrink-0 flex-col whitespace-nowrap ${w}`}>
            <span className="flex h-[21px] items-center">{a}</span><span className="flex h-[18px] items-center">{b}</span>
          </div>
        ))}
      </div>
      <div className="flex h-[28px] shrink-0 items-center">
        {status.map(([t, w], i) => (
          <div key={i} className={`flex h-[25px] shrink-0 items-center border-r border-[#d7d7d7] pt-[4px] pl-[4px] tracking-[-0.1px] whitespace-pre ${w}`}>{t}</div>
        ))}
      </div>
      <div className="flex h-[60px] shrink-0 items-center border-t border-[#4a4c4c] bg-linear-to-r from-[#202124] from-30% via-[#3a2518] via-60% to-[#202124] to-80% text-white">
        <div className="flex w-[685px] pl-[22px]">
          <Ic><circle cx="14" cy="14" r="13" fill="#9aa3ad" /><path d="M14 25a5 5 0 011-8 6 6 0 0111 1 4 4 0 010 8H15z" fill="#f2f2f5" /></Ic>
        </div>
        {taskIcons.map((n, k) => (
          <div key={k} className={k === 9 ? 'relative ml-[2px] flex h-[50px] w-[50px] items-center justify-center rounded border border-[#463429] bg-[#3a2a20]' : 'flex w-[55px] justify-center'}>
            {n}
            {k === 9 && <div className="absolute bottom-0 h-[4px] w-[19px] rounded bg-[#4cc2ff]" />}
          </div>
        ))}
        <div className="ml-auto flex items-center pr-[24px]">
          <svg width="16" height="10" fill="none"><path d="M1 9l7-7 7 7" stroke="#fff" strokeWidth="1.400" /></svg>
          <svg width="24" height="24" fill="none" className="ml-[11px]"><path d="M3 11c1-9 13-11 17-3M20 2v7h-6M4 22v-6h6M4 17c2 4 5 5 8 4.500" stroke="#eee" strokeWidth="1.400" /><circle cx="17" cy="17" r="5.300" fill="#f00" /></svg>
          <div className="ml-[13px] flex w-[34px] flex-col items-center gap-[6px]"><span>ENG</span><span>IN</span></div>
          <svg width="22" height="22" fill="none" className="ml-[20px]"><circle cx="10" cy="10" r="8.800" stroke="#fff" strokeWidth="1.300" /><path d="M1 7h18M1 13h10M10 1c-5 5-5 13 0 18M10 1c3 3 4 6 4 9" stroke="#fff" strokeWidth="1.200" /><circle cx="15.500" cy="15.500" r="5" fill="#242526" stroke="#fff" strokeWidth="1.300" /><path d="M12 19l7-7" stroke="#fff" strokeWidth="1.300" /></svg>
          <svg width="22" height="20" fill="none" className="ml-[8px]"><path d="M1 7h4l5-4v14l-5-4H1zM13 7q2 3 0 6M16 5q4 5 0 10M18.500 2.500q6 7.500 0 15" stroke="#fff" strokeWidth="1.300" /></svg>
          <svg width="22" height="16" fill="none" className="ml-[8px]"><rect x="1" y="2" width="17" height="12" rx="3" stroke="#fff" strokeWidth="1.300" /><rect x="3.500" y="4.500" width="11" height="7" rx="1" fill="#fff" /><path d="M20 6v4" stroke="#fff" strokeWidth="1.500" /></svg>
          <div className="ml-[17px] flex w-[80px] flex-col items-end gap-[6px] whitespace-nowrap"><span>19:05</span><span className="tracking-[0.45px]">29-04-2024</span></div>
          <div className="ml-[8px] flex size-[20px] items-center justify-center rounded-full bg-[#4cc2ff] text-[11px] text-black">2</div>
        </div>
      </div>
    </div>
  );
}
